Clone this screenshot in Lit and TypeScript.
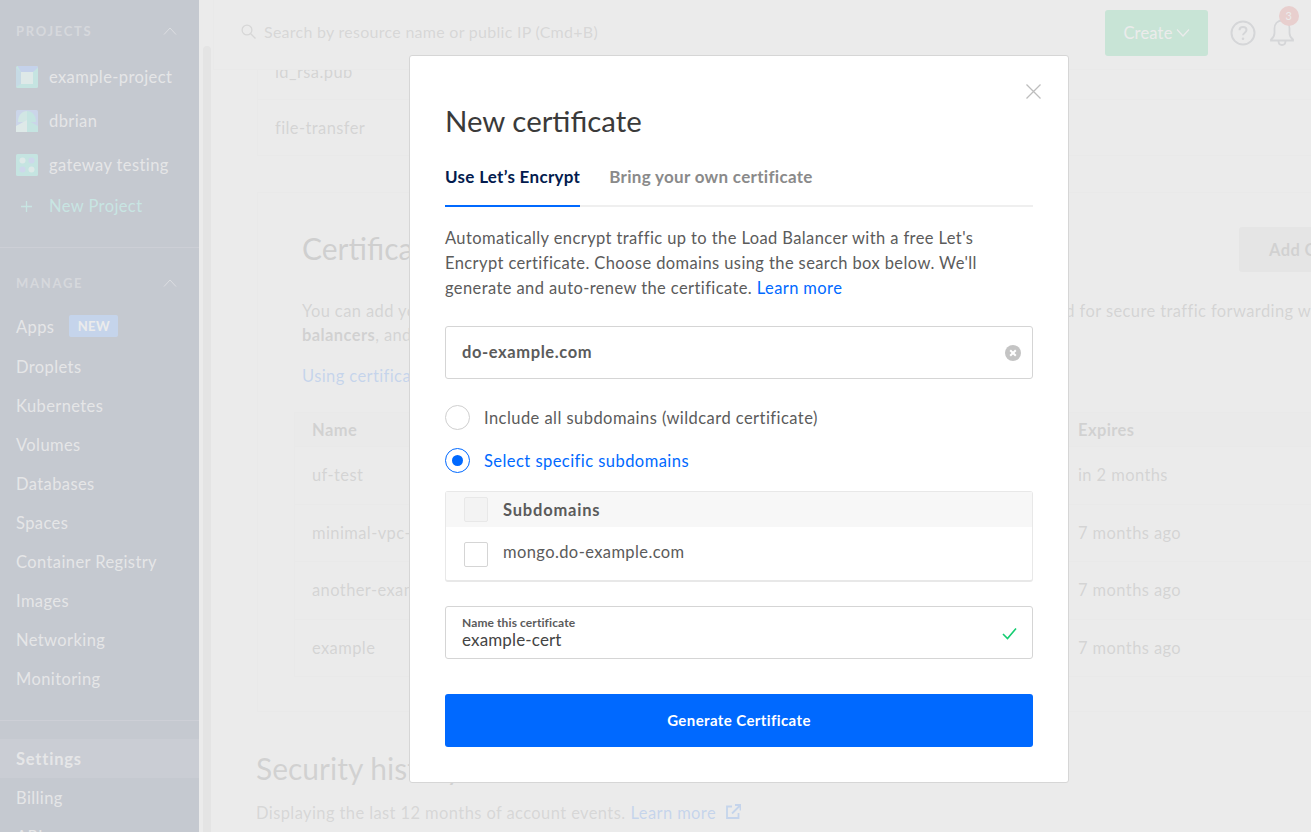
import { LitElement, html, css, svg } from "lit";
import { customElement } from "lit/decorators.js";

const MANAGE = ["Droplets","Kubernetes","Volumes","Databases","Spaces","Container Registry","Images","Networking","Monitoring"];
const ROWS = [["uf-test","in 2 months"],["minimal-vpc-certificate","7 months ago"],["another-example-certificate","7 months ago"],["example","7 months ago"]];

const chevUp = html`<svg class="chev" width="14" height="8" viewBox="0 0 14 8"><path d="M1 7.5 7 1l6 6.5" fill="none" stroke="#fff" stroke-opacity=".6" stroke-width="1"/></svg>`;
const p1 = svg`<rect width="22" height="22" rx="1.5" fill="#00ceba"/><path d="M1.500 0h19A1.500 1.500 0 0 1 22 1.500L17 6H5z" fill="#0057ff"/><path d="M0 1.500 5 6v12L0 21z" fill="#0a90d8"/><rect x="5" y="6" width="12" height="12" fill="#a5f2ec"/>`;
const p2 = svg`<rect width="22" height="22" rx="1.500" fill="#2a6cf0"/><path d="M2 12C2 5 6 1 11 1v11z" fill="#4fdccf"/><path d="M20 12c0-7-4-11-9-11v11z" fill="#00ceba"/><path d="M0 22v-6l11-6v12z" fill="#a5f2ec"/><path d="M22 22v-6l-11-6v12z" fill="#00ceba"/>`;
const p3 = svg`<rect width="22" height="22" rx="1.5" fill="#00ceba"/><circle cx="6.500" cy="6.500" r="3" fill="#a5f2ec"/><circle cx="15.500" cy="6.500" r="3" fill="#3d78ff"/><circle cx="6.500" cy="15.500" r="3" fill="#3d78ff"/><circle cx="15.500" cy="15.500" r="3" fill="#a5f2ec"/>`;
const PROJECTS = [["example-project",p1],["dbrian",p2],["gateway testing",p3]] as const;

@customElement("app-root")
export class AppRoot extends LitElement {
  static styles = css`
    :host { display:flex; position:relative; width:1311px; height:832px; overflow:hidden; background:#fff;
      font-family:Lato,"Open Sans",sans-serif; font-size:16.5px; letter-spacing:.4px; color:#666; }
    * { box-sizing:border-box; }
    .sidebar { width:199px; flex:none; background:#031b4e; color:rgba(255,255,255,.85); overflow:hidden; display:flex; flex-direction:column; }
    .sidebar > * { flex:none; }
    .gutter { width:12px; flex:none; padding:46px 0 0 4px; }
    .thumb { width:8px; height:100%; background:#ccc; border-radius:4px 4px 0 0; }
    .sec { height:20px; margin:21px 0 0; padding:0 22px 0 16px; display:flex; align-items:center; justify-content:space-between;
      font-size:13px; letter-spacing:1.7px; font-weight:700; color:rgba(255,255,255,.45); }
    .proj { display:flex; flex-direction:column; margin-top:14px; }
    .pr { height:44px; flex:none; display:flex; align-items:center; gap:11px; padding-left:16px; }
    .pr svg { flex:none; }
    .new { height:38px; flex:none; display:flex; align-items:center; color:#14d6c4; padding-left:21px; gap:17px; }
    .rule { height:1px; background:rgba(255,255,255,.2); }
    .r1 { margin-top:22px; }
    .s2 { margin-top:25px; }
    .mg { display:flex; flex-direction:column; margin-top:14px; }
    .it { height:39px; flex:none; display:flex; align-items:center; padding-left:16px; }
    .apps { height:40px; }
    .badge { margin-left:15px; height:22px; width:49px; border-radius:2px; background:#0069ff; color:#fff; font-size:13px; font-weight:700;
      display:flex; align-items:center; justify-content:center; margin-top:-3px; }
    .r2 { margin-top:22px; margin-bottom:18px; }
    .act { background:rgba(255,255,255,.12); font-weight:700; letter-spacing:.8px; }
    .main { flex:1; min-width:0; display:flex; flex-direction:column; }
    .top { height:70px; flex:none; display:flex; align-items:center; padding:0 0 0 27px; margin-left:2px; border-bottom:1px solid #f0f0f0; border-left:1px solid #f0f0f0; background:#fff; }
    .search { display:flex; align-items:center; gap:8px; flex:1; color:#777; margin-top:-6px; font-size:16px; letter-spacing:.27px; }
    .create { width:103px; height:46px; background:#15cd72; border-radius:3px; color:#fff; display:flex; align-items:center; justify-content:center; gap:3px; margin-top:-4px; letter-spacing:.2px; }
    .help { margin:-4px 0 0 22px; display:block; }
    .bellw { position:relative; width:46px; height:46px; margin-left:9px; margin-top:-4px; }
    .bell { position:absolute; left:5px; top:9px; }
    .n { position:absolute; left:14px; top:-4px; width:20px; height:20px; border-radius:50%; background:#e8423f; color:#fff; font-size:11px; display:flex; align-items:center; justify-content:center; }
    .scroll { flex:1; min-height:0; overflow:hidden; }
    .inner { width:1212px; margin:-26px 0 0 46px; }
    .card { border:1px solid #f0f0f0; }
    .fr { height:55px; display:flex; align-items:center; padding-left:17px; border-bottom:1px solid #f0f0f0; }
    .fr:last-child { border-bottom:0; }
    .cert { margin-top:36px; padding:34px 44px 34px 44px; height:520px; }
    .tr { display:flex; justify-content:space-between; align-items:center; height:45px; }
    h2 { font-weight:400; font-size:30px; letter-spacing:0; margin:-4px 0 0; color:#444; white-space:nowrap; }
    .add { width:185px; height:45px; background:#d6d6d6; color:#555; font-weight:700; display:flex; align-items:center; padding-left:30px; border-radius:3px; }
    .d { margin-top:27px; line-height:24px; white-space:nowrap; }
    .d b { color:#555; }
    .lk { color:#0069ff; }
    .using { margin-top:17px; line-height:25px; }
    .tbl { margin:23px -1px 0 -8px; border:1px solid #f0f0f0; border-bottom:0; width:1098px; }
    .rw { display:grid; grid-template-columns:766px 1fr; height:57.5px; align-items:center; padding-left:17px; border-bottom:1px solid #f0f0f0; }
    .hd { height:34px; background:#f6f6f6; font-weight:700; color:#555; }
    h3 { font-weight:400; font-size:30px; letter-spacing:0; margin:36px 0 0 -1px; color:#555; line-height:40px; }
    .sub { margin:15px 0 0 -1px; display:flex; align-items:center; gap:5px; color:#777; letter-spacing:.4px; }
    .sub svg { margin-left:5px; margin-top:-4px; }
    .scrim { position:absolute; inset:0; background:rgba(232,232,232,.85); }
    .modal { position:absolute; left:409px; top:55px; width:660px; height:728px; background:#fff; border:1px solid #d6d6d6; border-radius:3px; padding:40px 35px 0 35px; color:#5b5b5b; display:flex; flex-direction:column; }
    .x { position:absolute; left:616px; top:28px; }
    h1 { font-weight:400; font-size:29.400px; letter-spacing:0; line-height:50px; margin:0; color:#3a3a3a; }
    .tabs { display:flex; gap:29px; margin-top:15px; border-bottom:2px solid #efefef; height:46px; flex:none; }
    .tab { font-weight:700; font-size:17px; letter-spacing:.3px; height:46px; padding-top:4px; line-height:24px; color:#8a8a8a; }
    .tab.on { color:#031b4e; border-bottom:2px solid #0069ff; }
    .p { margin:19px 0 0; line-height:25px; }
    .inp { margin-top:25px; height:53px; border:1px solid #d5d5d5; border-radius:3px; display:flex; align-items:center; justify-content:space-between; padding:0 11px 0 16px; font-weight:700; letter-spacing:.6px; flex:none; }
    .inp span { padding-bottom:2px; }
    .radios { margin-top:26px; display:flex; flex-direction:column; gap:18px; }
    .ra { display:flex; align-items:center; gap:14px; height:25px; letter-spacing:.45px; }
    .dot { width:25px; height:25px; border-radius:50%; border:1px solid #cfcfcf; flex:none; display:flex; align-items:center; justify-content:center; }
    .ra.on { color:#0069ff; }
    .ra.on .dot { border-color:#0069ff; }
    .ra.on .dot::after { content:""; width:11px; height:11px; border-radius:50%; background:#0069ff; }
    .sd { margin-top:18px; height:91px; border:1px solid #e8e8e8; border-bottom-width:2px; border-radius:3px; flex:none; }
    .sh { height:35px; background:#f7f7f7; display:flex; align-items:center; padding-left:18px; gap:15px; font-weight:700; letter-spacing:.8px; }
    .sr { height:53px; display:flex; align-items:center; padding-left:18px; gap:15px; }
    .sr .cb { margin-top:2px; }
    .sr span:last-child { padding-bottom:3px; }
    .cb { width:24px; height:25px; border:1px solid #d5d5d5; border-radius:2px; flex:none; background:#fff; }
    .sh .cb { background:#f3f3f3; border-color:#e8e8e8; }
    .nm { margin-top:24px; height:53px; border:1px solid #d5d5d5; border-radius:3px; padding:8px 15px 0 16px; display:flex; justify-content:space-between; flex:none; }
    .lb { font-size:12px; font-weight:700; line-height:15px; letter-spacing:.1px; }
    .vl { font-size:17px; line-height:22px; letter-spacing:.15px; color:#444; margin-top:-1px; }
    .ok { margin-top:12px; }
    .go { margin-top:35px; height:53px; background:#0069ff; color:#fff; font-weight:700; font-size:15px; border-radius:3px; display:flex; align-items:center; justify-content:center; flex:none; padding-bottom:2px; }
  `;

  render() {
    return html`
      <nav class="sidebar">
        <div class="sec"><span>PROJECTS</span>${chevUp}</div>
        <div class="proj">
          ${PROJECTS.map(([n, g]) => html`<div class="pr"><svg width="22" height="22" viewBox="0 0 22 22">${g}</svg><span>${n}</span></div>`)}
          <div class="new"><svg width="11" height="11" viewBox="0 0 11 11"><path d="M5.500 0v11M0 5.500h11" stroke="#14d6c4" stroke-width="1.300"/></svg><span>New Project</span></div>
        </div>
        <div class="rule r1"></div>
        <div class="sec s2"><span>MANAGE</span>${chevUp}</div>
        <div class="mg">
          <div class="it apps">Apps<span class="badge">NEW</span></div>
          ${MANAGE.map((m) => html`<div class="it">${m}</div>`)}
        </div>
        <div class="rule r2"></div>
        <div class="it act">Settings</div>
        <div class="it">Billing</div>
        <div class="it">API</div>
      </nav>
      <div class="gutter"><div class="thumb"></div></div>
      <div class="main">
        <header class="top">
          <div class="search">
            <svg width="15" height="15" viewBox="0 0 15 15" fill="none" stroke="#777" stroke-width="1.300"><circle cx="6" cy="6" r="4.900"/><path d="M9.700 9.700 14.500 14.500"/></svg>
            <span>Search by resource name or public IP (Cmd+B)</span>
          </div>
          <div class="create">Create<svg width="14" height="8" viewBox="0 0 14 8"><path d="M1 .5 7 7l6-6.500" fill="none" stroke="#fff" stroke-width="1.200"/></svg></div>
          <svg class="help" width="26" height="26" viewBox="0 0 26 26" fill="none"><circle cx="13" cy="13" r="11.500" stroke="#6b7280" stroke-width="2"/><path d="M9.500 10.300c0-2 1.600-3.200 3.500-3.200s3.500 1.200 3.500 3c0 2.700-3.500 2.500-3.500 5.200" stroke="#6b7280" stroke-width="2"/><circle cx="13" cy="18.700" r="1.300" fill="#6b7280"/></svg>
          <div class="bellw">
            <svg class="bell" width="24" height="28" viewBox="0 0 24 28" fill="none" stroke="#6b7280" stroke-width="1.800"><path d="M12 1.500c-4.600 0-7.500 3.300-7.500 8v4.500c0 3-1.500 5-3.500 6.500v1h22v-1c-2-1.500-3.500-3.500-3.500-6.500V9.500c0-4.700-2.900-8-7.500-8z"/><path d="M8.500 22c0 2.300 1.500 4 3.500 4s3.500-1.700 3.500-4"/></svg>
            <div class="n">3</div>
          </div>
        </header>
        <div class="scroll"><div class="inner">
          <div class="card">
            <div class="fr">id_rsa.pub</div>
            <div class="fr">file-transfer</div>
          </div>
          <div class="card cert">
            <div class="tr"><h2>Certificates</h2><div class="add">Add Certificate</div></div>
            <div class="d">You can add your own SSL certificates, or create free ones with Let's Encrypt. Certificates can be used for secure traffic forwarding with<br><b>balancers</b>, and Spaces CDN endpoints.</div>
            <div class="using lk">Using certificates</div>
            <div class="tbl">
              <div class="rw hd"><span>Name</span><span>Expires</span></div>
              ${ROWS.map(([a, b]) => html`<div class="rw"><span>${a}</span><span>${b}</span></div>`)}
            </div>
          </div>
          <h3>Security history</h3>
          <div class="sub"><span>Displaying the last 12 months of account events.</span><span class="lk">Learn more</span>
            <svg width="15" height="15" viewBox="0 0 15 15" fill="none" stroke="#0069ff" stroke-width="1.800"><path d="M6 2.500H1v11.500h11.500V9"/><path d="M6 9.500 14 1.500M9 1h5.500v5.500"/></svg></div>
        </div></div>
      </div>
      <div class="scrim"></div>
      <section class="modal">
        <svg class="x" width="15" height="15" viewBox="0 0 15 15"><path d="M.5.500l14 14M14.500.500l-14 14" stroke="#bdbdbd" stroke-width="1.300"/></svg>
        <h1>New certificate</h1>
        <div class="tabs"><div class="tab on">Use Let’s Encrypt</div><div class="tab">Bring your own certificate</div></div>
        <p class="p">Automatically encrypt traffic up to the Load Balancer with a free Let's<br>Encrypt certificate. Choose domains using the search box below. We'll<br>generate and auto-renew the certificate. <span class="lk">Learn more</span></p>
        <div class="inp"><span>do-example.com</span>
          <svg width="16" height="16" viewBox="0 0 16 16"><circle cx="8" cy="8" r="8" fill="#c4c4c4"/><path d="M5.200 5.200l5.600 5.600M10.800 5.200l-5.600 5.600" stroke="#fff" stroke-width="2"/></svg></div>
        <div class="radios">
          <div class="ra"><span class="dot"></span><span>Include all subdomains (wildcard certificate)</span></div>
          <div class="ra on"><span class="dot"></span><span>Select specific subdomains</span></div>
        </div>
        <div class="sd">
          <div class="sh"><span class="cb"></span>Subdomains</div>
          <div class="sr"><span class="cb"></span><span>mongo.do-example.com</span></div>
        </div>
        <div class="nm"><div><div class="lb">Name this certificate</div><div class="vl">example-cert</div></div>
          <svg class="ok" width="15" height="13" viewBox="0 0 15 13"><path d="M1 7l4.500 4.500L14 1.500" fill="none" stroke="#15cd72" stroke-width="1.600"/></svg></div>
        <div class="go">Generate Certificate</div>
      </section>
    `;
  }
}
